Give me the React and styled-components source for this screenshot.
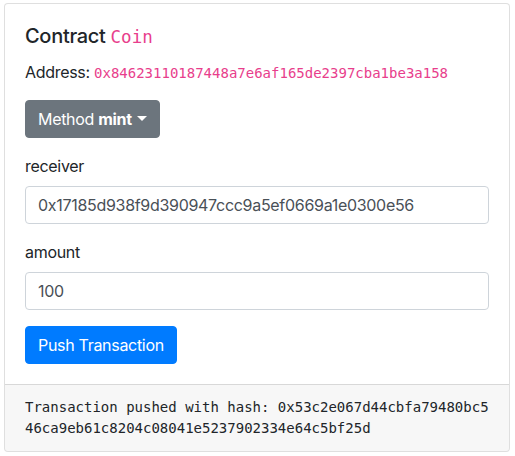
import React from "react";
import styled, { createGlobalStyle } from "styled-components";

const GlobalStyle = createGlobalStyle`
  * { box-sizing: border-box; }
  body {
    margin: 0;
    background: #fff;
    font-family: Inter, "Liberation Sans", sans-serif;
    font-size: 16px;
    line-height: 1.5;
    letter-spacing: -0.3px;
    color: #212529;
  }
`;

const Page = styled.div`
  padding: 3px 4px;
`;

const Card = styled.div`
  width: 506px;
  border: 1px solid rgba(0, 0, 0, 0.125);
  border-radius: 4px;
  background: #fff;
  overflow: hidden;
`;

const CardBody = styled.div`
  padding: 20px;
`;

const Title = styled.h5`
  margin: 0 0 12px;
  font-size: 20px;
  font-weight: 500;
  line-height: 1.2;
`;

const Code = styled.code`
  font-family: "DejaVu Sans Mono", "Liberation Mono", monospace;
  font-size: 87.5%;
  letter-spacing: 0;
  color: #e83e8c;
`;

const Text = styled.p`
  margin: 0 0 16px;
`;

const Button = styled.button`
  display: inline-block;
  font-family: inherit;
  font-size: 16px;
  line-height: 1.5;
  letter-spacing: inherit;
  padding: 6px 12px;
  border: 1px solid ${(p) => p.$bg};
  border-radius: 4px;
  background: ${(p) => p.$bg};
  color: #fff;
  cursor: pointer;
`;

const Caret = styled.span`
  display: inline-block;
  margin-left: 0.3em;
  vertical-align: 0.255em;
  border-top: 0.32em solid;
  border-right: 0.32em solid transparent;
  border-left: 0.32em solid transparent;
`;

const Form = styled.form`
  margin-top: 16px;
`;

const Group = styled.div`
  margin-bottom: 16px;
`;

const Label = styled.label`
  display: block;
  margin-bottom: 8px;
`;

const Input = styled.input`
  display: block;
  width: 100%;
  height: 38px;
  padding: 6px 12px;
  font-family: inherit;
  font-size: 16px;
  line-height: 1.5;
  letter-spacing: inherit;
  color: #495057;
  background: #fff;
  border: 1px solid #ced4da;
  border-radius: 4px;
`;

const Footer = styled.div`
  padding: 12px 20px;
  background: rgba(0, 0, 0, 0.03);
  border-top: 1px solid rgba(0, 0, 0, 0.125);
`;

const Pre = styled.pre`
  margin: 0;
  font-family: "DejaVu Sans Mono", "Liberation Mono", monospace;
  font-size: 14px;
  line-height: 1.5;
  letter-spacing: 0;
  color: #212529;
  white-space: pre-wrap;
  word-break: break-all;
`;

export default function App() {
  return (
    <Page>
      <GlobalStyle />
      <Card>
        <CardBody>
          <Title>
            Contract <Code>Coin</Code>
          </Title>
          <Text>
            Address: <Code>0x84623110187448a7e6af165de2397cba1be3a158</Code>
          </Text>
          <Button type="button" $bg="#6c757d">
            Method <b>mint</b>
            <Caret />
          </Button>
          <Form onSubmit={(e) => e.preventDefault()}>
            <Group>
              <Label>receiver</Label>
              <Input defaultValue="0x17185d938f9d390947ccc9a5ef0669a1e0300e56" />
            </Group>
            <Group>
              <Label>amount</Label>
              <Input defaultValue="100" />
            </Group>
            <Button type="submit" $bg="#007bff">
              Push Transaction
            </Button>
          </Form>
        </CardBody>
        <Footer>
          <Pre>
            Transaction pushed with hash: 0x53c2e067d44cbfa79480bc546ca9eb61c8204c08041e5237902334e64c5bf25d
          </Pre>
        </Footer>
      </Card>
    </Page>
  );
}
